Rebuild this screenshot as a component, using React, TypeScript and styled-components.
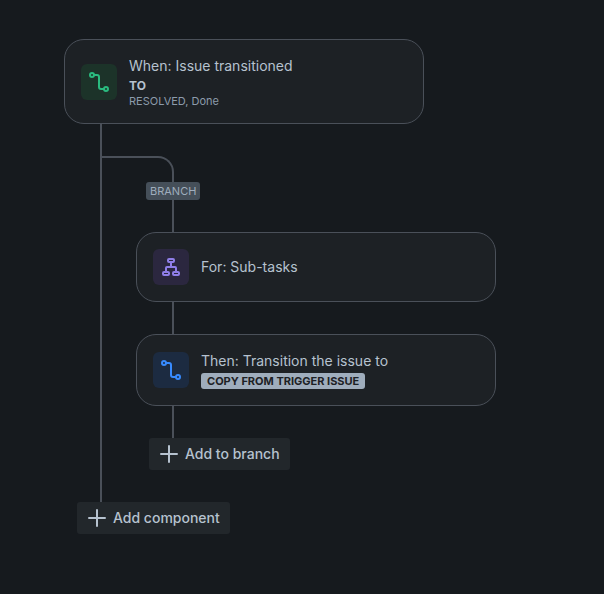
import React from "react";
import styled, { createGlobalStyle } from "styled-components";

const LINE = "#4a5059";

const GlobalStyle = createGlobalStyle`
  *, *::before, *::after { box-sizing: border-box; }
  body {
    margin: 0;
    background: #161a1e;
    color: #b6c2cf;
    font-family: Inter, "Liberation Sans", sans-serif;
    font-size: 14px;
    line-height: 20px;
  }
`;

const Canvas = styled.main`
  padding: 39px 64px 60px;
`;

const Card = styled.section`
  display: flex;
  align-items: center;
  gap: 12px;
  width: 100%;
  max-width: 360px;
  padding: 16px;
  border: 1px solid ${LINE};
  border-radius: 20px;
  background: #1d2125;
`;

const tones = {
  green: { bg: "#1c3329", fg: "#2abb7f" },
  purple: { bg: "#2b273f", fg: "#8f7ee7" },
  blue: { bg: "#1c2b41", fg: "#388bff" },
};

const IconTile = styled.span<{ $tone: keyof typeof tones }>`
  display: flex;
  flex: none;
  align-items: center;
  justify-content: center;
  width: 36px;
  height: 36px;
  border-radius: 6px;
  background: ${(p) => tones[p.$tone].bg};
  color: ${(p) => tones[p.$tone].fg};
`;

const CardText = styled.div`
  min-width: 0;
`;

const Title = styled.h2`
  margin: 0;
  font-size: 14px;
  line-height: 20px;
  font-weight: 400;
`;

const Keyword = styled.div`
  font-size: 12px;
  line-height: 19px;
  font-weight: 700;
`;

const Detail = styled.div`
  font-size: 11px;
  line-height: 12px;
  color: #8c9bab;
`;

const Lozenge = styled.span`
  display: block;
  width: fit-content;
  margin-top: 2px;
  padding: 0 6px;
  border-radius: 3px;
  background: #9fadbc;
  color: #1d2125;
  font-size: 11px;
  line-height: 16px;
  font-weight: 700;
`;

const Trunk = styled.div`
  margin-left: 36px;
  padding: 32px 0;
  border-left: 2px solid ${LINE};
`;

const Branch = styled.div`
  display: flex;
  flex-direction: column;
  align-items: flex-start;
`;

const Elbow = styled.div`
  width: 72px;
  height: 26px;
  border-top: 2px solid ${LINE};
  border-right: 2px solid ${LINE};
  border-top-right-radius: 16px;
`;

const BranchTag = styled.span`
  margin-left: 44px;
  padding: 0 4px;
  border-radius: 3px;
  background: #454f59;
  color: #9fadbc;
  font-size: 11px;
  line-height: 18px;
`;

const Connector = styled.div`
  width: 2px;
  height: 32px;
  margin-left: 70px;
  background: ${LINE};
`;

const BranchStep = styled.div`
  width: 100%;
  padding-left: 34px;
`;

const AddButton = styled.button<{ $indent: number }>`
  display: flex;
  align-items: center;
  gap: 6px;
  height: 32px;
  margin: 0 0 0 ${(p) => p.$indent}px;
  padding: 0 10px;
  border: 0;
  border-radius: 3px;
  background: #22272b;
  color: #b6c2cf;
  font: inherit;
  font-weight: 500;
  cursor: pointer;
`;

const TransitionIcon = () => (
  <svg width="24" height="24" viewBox="0 0 24 24" fill="none" stroke="currentColor" strokeWidth="2" aria-hidden="true">
    <circle cx="5" cy="5" r="2" />
    <circle cx="19" cy="19" r="2" />
    <path d="M7 5h3a2 2 0 0 1 2 2v10a2 2 0 0 0 2 2h3" />
  </svg>
);

const BranchIcon = () => (
  <svg width="24" height="24" viewBox="0 0 24 24" fill="none" stroke="currentColor" strokeWidth="2" aria-hidden="true">
    <rect x="9" y="4" width="6" height="3" rx="1" />
    <rect x="4" y="17" width="6" height="3" rx="1" />
    <rect x="14" y="17" width="6" height="3" rx="1" />
    <path d="M12 7v5M7 17v-4a1 1 0 0 1 1-1h8a1 1 0 0 1 1 1v4" />
  </svg>
);

const PlusIcon = () => (
  <svg width="20" height="20" viewBox="0 0 20 20" fill="none" stroke="currentColor" strokeWidth="2" strokeLinecap="round" aria-hidden="true">
    <path d="M10 2v16M2 10h16" />
  </svg>
);

export default function App() {
  return (
    <>
      <GlobalStyle />
      <Canvas>
        <Card>
          <IconTile $tone="green"><TransitionIcon /></IconTile>
          <CardText>
            <Title>When: Issue transitioned</Title>
            <Keyword>TO</Keyword>
            <Detail>RESOLVED, Done</Detail>
          </CardText>
        </Card>
        <Trunk>
          <Branch>
            <Elbow />
            <BranchTag>BRANCH</BranchTag>
            <Connector />
            <BranchStep>
              <Card>
                <IconTile $tone="purple"><BranchIcon /></IconTile>
                <CardText>
                  <Title>For: Sub-tasks</Title>
                </CardText>
              </Card>
            </BranchStep>
            <Connector />
            <BranchStep>
              <Card>
                <IconTile $tone="blue"><TransitionIcon /></IconTile>
                <CardText>
                  <Title>Then: Transition the issue to</Title>
                  <Lozenge>COPY FROM TRIGGER ISSUE</Lozenge>
                </CardText>
              </Card>
            </BranchStep>
            <Connector />
            <AddButton type="button" $indent={47}><PlusIcon />Add to branch</AddButton>
          </Branch>
        </Trunk>
        <AddButton type="button" $indent={13}><PlusIcon />Add component</AddButton>
      </Canvas>
    </>
  );
}
